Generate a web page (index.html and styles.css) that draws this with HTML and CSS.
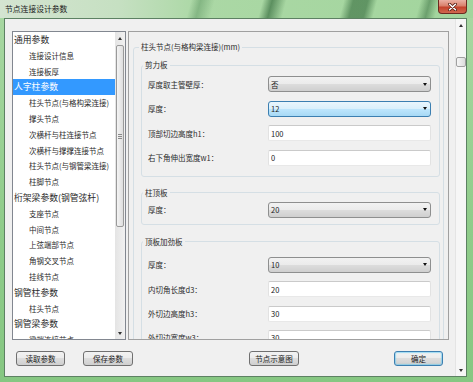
FILE: index.html
```html
<!DOCTYPE html>
<html lang="zh-CN">
<head>
    <meta charset="UTF-8">
    <title>节点连接设计参数</title>
    <link rel="stylesheet" href="styles.css">
</head>
<body>
    <div class="window">
        <div class="titlebar">
            <span class="title">节点连接设计参数</span>
            <div class="close-btn">
                <svg width="9" height="8" viewBox="0 0 9 8">
                    <path d="M1.5 1.2 L7.5 6.8 M7.5 1.2 L1.5 6.8" stroke="#5a2218" stroke-width="3" stroke-linecap="round"/>
                    <path d="M1.5 1.2 L7.5 6.8 M7.5 1.2 L1.5 6.8" stroke="#fff" stroke-width="1.5" stroke-linecap="round"/>
                </svg>
            </div>
        </div>

        <div class="client">
            <div class="main">
                <div class="panes">
                    <div class="tree">
                        <ul class="tree-list">
                            <li class="top">通用参数</li>
                            <li class="child">连接设计信息</li>
                            <li class="child">连接板厚</li>
                            <li class="top selected">人字柱参数</li>
                            <li class="child">柱头节点(与格构梁连接)</li>
                            <li class="child">撑头节点</li>
                            <li class="child">次横杆与柱连接节点</li>
                            <li class="child">次横杆与撑撑连接节点</li>
                            <li class="child">柱头节点(与钢管梁连接)</li>
                            <li class="child">柱脚节点</li>
                            <li class="top">桁架梁参数(钢管弦杆)</li>
                            <li class="child">支座节点</li>
                            <li class="child">中间节点</li>
                            <li class="child">上弦端部节点</li>
                            <li class="child">角钢交叉节点</li>
                            <li class="child">挂线节点</li>
                            <li class="top">钢管柱参数</li>
                            <li class="child">柱头节点</li>
                            <li class="top">钢管梁参数</li>
                            <li class="child">梁端连接节点</li>
                        </ul>
                        <div class="sb">
                            <div class="sb-arrow"><span class="tri-up"></span></div>
                            <div class="sb-thumb"><span class="grip"></span></div>
                            <div class="sb-fill"></div>
                            <div class="sb-arrow"><span class="tri-down"></span></div>
                        </div>
                    </div>

                    <div class="pane">
                        <fieldset class="group outer">
                            <legend>柱头节点(与格构梁连接)(mm)</legend>

                            <fieldset class="group sub sub-shear">
                                <legend>剪力板</legend>
                                <div class="rows">
                                    <div class="row">
                                        <label>厚度取主管壁厚：</label>
                                        <div class="combo">否<span class="arrow"></span></div>
                                    </div>
                                    <div class="row">
                                        <label>厚度：</label>
                                        <div class="combo focus">12<span class="arrow"></span></div>
                                    </div>
                                    <div class="row">
                                        <label>顶部切边高度h1：</label>
                                        <input class="field" type="text" value="100" readonly>
                                    </div>
                                    <div class="row">
                                        <label>右下角伸出宽度w1：</label>
                                        <input class="field" type="text" value="0" readonly>
                                    </div>
                                </div>
                            </fieldset>

                            <fieldset class="group sub sub-top">
                                <legend>柱顶板</legend>
                                <div class="rows">
                                    <div class="row">
                                        <label>厚度：</label>
                                        <div class="combo">20<span class="arrow"></span></div>
                                    </div>
                                </div>
                            </fieldset>

                            <fieldset class="group sub sub-stiff">
                                <legend>顶板加劲板</legend>
                                <div class="rows">
                                    <div class="row">
                                        <label>厚度：</label>
                                        <div class="combo">10<span class="arrow"></span></div>
                                    </div>
                                    <div class="row">
                                        <label>内切角长度d3：</label>
                                        <input class="field" type="text" value="20" readonly>
                                    </div>
                                    <div class="row">
                                        <label>外切边高度h3：</label>
                                        <input class="field" type="text" value="30" readonly>
                                    </div>
                                    <div class="row">
                                        <label>外切边宽度w3：</label>
                                        <input class="field" type="text" value="30" readonly>
                                    </div>
                                </div>
                            </fieldset>
                        </fieldset>
                    </div>
                </div>

                <div class="buttons">
                    <button type="button" class="btn btn-load">读取参数</button>
                    <button type="button" class="btn btn-save">保存参数</button>
                    <button type="button" class="btn btn-diagram">节点示意图</button>
                    <button type="button" class="btn btn-ok">确定</button>
                </div>
            </div>

            <div class="vscroll">
                <div class="vs-arrow"><span class="tri-up"></span></div>
                <div class="vs-thumb"></div>
                <div class="sb-fill"></div>
                <div class="vs-arrow"><span class="tri-down"></span></div>
            </div>
        </div>
    </div>
</body>
</html>
```

FILE: styles.css
```css
* {
    box-sizing: border-box;
}
body {
    margin: 0;
    font-family: "Noto Sans CJK SC", "Noto Sans", sans-serif;
    color: #333;
}
.window {
    width: 473px;
    height: 382px;
    display: flex;
    flex-direction: column;
    overflow: hidden;
    background: linear-gradient(#a9d8a3, #8fcc8a 60%, #86c782);
}
.titlebar {
    height: 18px;
    display: flex;
    align-items: flex-start;
    background:
        linear-gradient(105deg, transparent 0 40%, rgba(60, 120, 70, 0.35) 42%, transparent 45%,
            transparent 55%, rgba(40, 95, 50, 0.6) 57%, transparent 60%,
            transparent 72%, rgba(40, 95, 50, 0.55) 74% 77%, transparent 79%,
            transparent 88%, rgba(40, 95, 50, 0.45) 90%, transparent 92%),
        linear-gradient(to right, #d4e4d1, #c6e0c2 25%, #abd8a5 42%, #a2d59d 100%);
}
.title {
    font-size: 7.8px;
    line-height: 18px;
    padding-left: 5px;
    color: #1b1b1b;
}
.close-btn {
    margin-left: auto;
    margin-right: 6px;
    width: 29px;
    height: 14px;
    border: 1px solid #6d2a20;
    border-top: none;
    border-radius: 0 0 4px 4px;
    background: linear-gradient(#eab0a3, #d9806c 45%, #c4432c 55%, #d0684f);
    display: flex;
    align-items: center;
    justify-content: center;
}
.client {
    flex: 1;
    margin: 0 6px 5px 4px;
    border: 1px solid #5d8163;
    background: #f0f0f0;
    display: flex;
}
.main {
    flex: 1;
    display: flex;
    flex-direction: column;
    padding: 12px 6px 10px 7px;
}
.panes {
    display: flex;
    gap: 2px;
    height: 309px;
}

/* left tree */
.tree {
    width: 114px;
    border: 1px solid #828790;
    background: #fff;
    display: flex;
}
.tree-list {
    list-style: none;
    margin: 0;
    padding: 0;
    width: 102px;
    overflow: hidden;
}
.tree-list li {
    height: 15.8px;
    line-height: 15.8px;
    white-space: nowrap;
    color: #2b2b2b;
}
.tree-list .top {
    font-size: 8.8px;
    padding-left: 1px;
}
.tree-list .child {
    font-size: 7.5px;
    padding-left: 16px;
}
.tree-list .selected {
    background: #3399ff;
    color: #fff;
}
.sb {
    width: 10px;
    display: flex;
    flex-direction: column;
    background: linear-gradient(to right, #e4e4e4, #f1f1f1);
}
.sb-arrow {
    height: 12px;
    display: flex;
    align-items: center;
    justify-content: center;
}
.sb-thumb {
    height: 182px;
    margin: 1px 1px 0;
    border: 1px solid #9a9a9a;
    border-radius: 2px;
    background: linear-gradient(to right, #f4f4f4, #dedede);
    display: flex;
    align-items: center;
    justify-content: center;
}
.grip {
    width: 4px;
    height: 5px;
    background: repeating-linear-gradient(#8a8a8a 0 1px, transparent 1px 2px);
}
.sb-fill {
    flex: 1;
}
.tri-up {
    width: 0;
    height: 0;
    border-left: 2.5px solid transparent;
    border-right: 2.5px solid transparent;
    border-bottom: 3px solid #333;
}
.tri-down {
    width: 0;
    height: 0;
    border-left: 2.5px solid transparent;
    border-right: 2.5px solid transparent;
    border-top: 3px solid #333;
}

/* right pane */
.pane {
    width: 321px;
    border: 1px solid #a0a0a0;
    overflow: hidden;
}
.group {
    border: 1px solid #d5dfe5;
    border-radius: 3px;
    margin: 0;
    min-width: 0;
}
.group legend {
    font-size: 7.5px;
    line-height: 10px;
    color: #2b2b2b;
}
.outer {
    margin: 10px 4px 0;
    padding: 8px 3px 20px 7px;
}
.outer > legend {
    padding: 0 2px;
    margin-left: -2px;
}
.sub {
    padding: 0 7px 0 6px;
}
.sub > legend {
    padding: 0 2px;
    margin-left: -5px;
}
.sub-shear {
    padding-top: 6px;
    padding-bottom: 10px;
}
.sub-top {
    margin-top: 11px;
    padding-top: 4px;
    padding-bottom: 6px;
}
.sub-stiff {
    margin-top: 12px;
    padding-top: 10px;
    padding-bottom: 10px;
}
.rows {
    display: flex;
    flex-direction: column;
    gap: 8.6px;
}
.sub-stiff .rows {
    gap: 8.4px;
}
.row {
    display: flex;
    align-items: center;
    height: 16px;
}
.row label {
    width: 120px;
    font-size: 7.5px;
    color: #2b2b2b;
}
.combo {
    width: 163px;
    height: 16px;
    display: flex;
    align-items: center;
    padding-left: 2px;
    font-size: 7.5px;
    color: #222;
    border: 1px solid #8e8f8f;
    border-radius: 3px;
    background: linear-gradient(#f2f2f2, #ebebeb 50%, #dddddd 50%, #cfcfcf);
}
.combo.focus {
    border-color: #3c7fb1;
    background: linear-gradient(#eaf6fd, #d9f0fc 50%, #bee6fd 50%, #a7d9f5);
}
.arrow {
    margin-left: auto;
    margin-right: 3px;
    width: 0;
    height: 0;
    border-left: 2.5px solid transparent;
    border-right: 2.5px solid transparent;
    border-top: 3px solid #111;
}
.field {
    width: 163px;
    height: 16px;
    margin: 0;
    padding: 0 0 0 2px;
    font-family: inherit;
    font-size: 7.5px;
    color: #222;
    background: #fff;
    border: 1px solid;
    border-color: #cacaca #e2e2e2 #e8e8e8 #e2e2e2;
    border-radius: 2px;
    outline: none;
}

/* bottom buttons */
.buttons {
    display: flex;
    margin-top: 11px;
    height: 15px;
    padding-left: 4px;
}
.btn {
    height: 15px;
    padding: 0;
    font-family: inherit;
    font-size: 7.5px;
    color: #222;
    border: 1px solid #707070;
    border-radius: 3px;
    background: linear-gradient(#f2f2f2, #ebebeb 50%, #dddddd 50%, #cfcfcf);
}
.btn-load {
    width: 49px;
}
.btn-save {
    width: 50px;
    margin-left: 18px;
}
.btn-diagram {
    width: 50px;
    margin-left: 116px;
}
.btn-ok {
    width: 49px;
    margin-left: 95px;
    border-color: #3c7fb1;
    box-shadow: inset 0 0 1px 1px rgba(90, 200, 245, 0.55);
}

/* dialog scrollbar */
.vscroll {
    width: 11px;
    display: flex;
    flex-direction: column;
    background: #f6f6f6;
    border-left: 1px solid #e4e4e4;
}
.vs-arrow {
    height: 12px;
    display: flex;
    align-items: center;
    justify-content: center;
}
.vs-thumb {
    height: 10px;
    margin-top: 26px;
    border: 1px solid #a0a0a0;
    border-radius: 2px;
    background: linear-gradient(to right, #f6f6f6, #dcdcdc);
}
```
